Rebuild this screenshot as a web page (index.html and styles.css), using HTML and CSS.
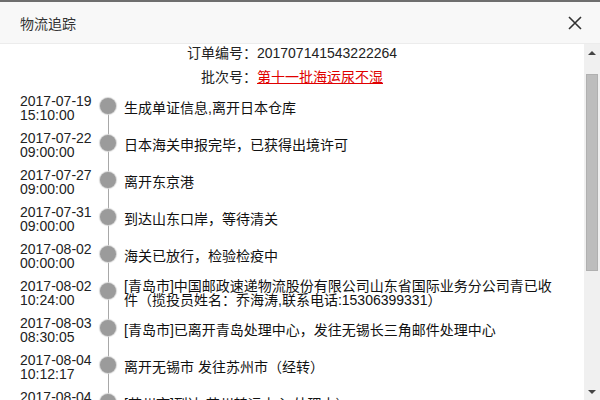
FILE: index.html
```html
<!DOCTYPE html>
<html lang="zh-CN">
<head>
<meta charset="utf-8">
<title>物流追踪</title>
<link rel="stylesheet" href="styles.css">
</head>
<body>
<div class="backdrop"></div>
<div class="modal">
  <div class="modal-header">
    <span class="modal-title">物流追踪</span>
    <svg class="close" width="14" height="14" viewBox="0 0 14 14"><path d="M1 1 L13 13 M13 1 L1 13" stroke="#333" stroke-width="1.6" fill="none"/></svg>
  </div>
  <div class="modal-body">
    <div class="content">
      <div class="info">订单编号：201707141543222264</div>
      <div class="info">批次号：<a class="batch" href="#">第十一批海运尿不湿</a></div>
      <div class="timeline">
        <div class="row first"><div class="date">2017-07-19<br>15:10:00</div><div class="node"><span class="dot"></span></div><div class="desc">生成单证信息,离开日本仓库</div></div>
        <div class="row"><div class="date">2017-07-22<br>09:00:00</div><div class="node"><span class="dot"></span></div><div class="desc">日本海关申报完毕，已获得出境许可</div></div>
        <div class="row"><div class="date">2017-07-27<br>09:00:00</div><div class="node"><span class="dot"></span></div><div class="desc">离开东京港</div></div>
        <div class="row"><div class="date">2017-07-31<br>09:00:00</div><div class="node"><span class="dot"></span></div><div class="desc">到达山东口岸，等待清关</div></div>
        <div class="row"><div class="date">2017-08-02<br>00:00:00</div><div class="node"><span class="dot"></span></div><div class="desc">海关已放行，检验检疫中</div></div>
        <div class="row"><div class="date">2017-08-02<br>10:24:00</div><div class="node"><span class="dot"></span></div><div class="desc">[青岛市]中国邮政速递物流股份有限公司山东省国际业务分公司青已收件（揽投员姓名：乔海涛,联系电话:15306399331）</div></div>
        <div class="row"><div class="date">2017-08-03<br>08:30:05</div><div class="node"><span class="dot"></span></div><div class="desc">[青岛市]已离开青岛处理中心，发往无锡长三角邮件处理中心</div></div>
        <div class="row"><div class="date">2017-08-04<br>10:12:17</div><div class="node"><span class="dot"></span></div><div class="desc">离开无锡市 发往苏州市（经转）</div></div>
        <div class="row"><div class="date">2017-08-04<br>13:40:21</div><div class="node"><span class="dot"></span></div><div class="desc">[苏州市]到达 苏州转运中心 处理中）</div></div>
      </div>
    </div>
    <div class="scrollbar">
      <div class="sb-btn"><span class="arrow-up"></span></div>
      <div class="sb-track"><div class="sb-thumb"></div></div>
      <div class="sb-btn"><span class="arrow-down"></span></div>
    </div>
  </div>
</div>
</body>
</html>
```
FILE: styles.css
```css
* { box-sizing: border-box; }
html, body { margin: 0; padding: 0; }
body {
  width: 600px;
  height: 400px;
  overflow: hidden;
  background: #fff;
  font-family: "Liberation Sans", Arial, "Noto Sans CJK SC", sans-serif;
  font-size: 14px;
  color: #222;
}
.backdrop {
  height: 2px;
  background: #6e6e6e;
}
.modal {
  display: flex;
  flex-direction: column;
  height: 398px;
}
.modal-header {
  height: 42px;
  flex: none;
  background: #f8f8f8;
  border-bottom: 1px solid #ececec;
  display: flex;
  align-items: center;
  justify-content: space-between;
  padding: 0 18px 0 20px;
}
.modal-title {
  color: #333;
  font-size: 14px;
}
.close { display: block; }
.modal-body {
  flex: 1;
  display: flex;
  min-height: 0;
}
.content {
  flex: 1;
  overflow: hidden;
  padding-top: 1px;
}
.info {
  text-align: center;
  height: 24px;
  line-height: 16px;
  color: #222;
}
.batch {
  color: #e00000;
  text-decoration: underline;
}
.timeline {
  padding-left: 20px;
  margin-top: -4px;
}
.row {
  display: grid;
  grid-template-columns: 80px 16px 442px;
  height: 37px;
  align-items: center;
}
.date {
  line-height: 14px;
  color: #222;
  padding-top: 1px;
  white-space: nowrap;
}
.node {
  position: relative;
  height: 37px;
  display: flex;
  align-items: center;
  justify-content: center;
}
.node::before {
  content: "";
  position: absolute;
  left: 7.5px;
  top: 0;
  bottom: 0;
  width: 1px;
  background: #a8a8a8;
}
.row.first .node::before { top: 15px; }
.dot {
  position: relative;
  width: 16px;
  height: 16px;
  border-radius: 50%;
  background: #9b9b9b;
  box-shadow: 0 0 1px 1px #d4d4d4;
  margin-top: -3px;
}
.desc {
  line-height: 14px;
  padding-top: 1px;
  margin-left: 8px;
  word-break: break-all;
  color: #111;
}
.scrollbar {
  width: 16px;
  flex: none;
  background: #f0f0f0;
  display: flex;
  flex-direction: column;
}
.sb-btn {
  height: 17px;
  flex: none;
  display: flex;
  align-items: center;
  justify-content: center;
}
.arrow-up {
  width: 0; height: 0;
  border-left: 4px solid transparent;
  border-right: 4px solid transparent;
  border-bottom: 4px solid #444;
}
.arrow-down {
  width: 0; height: 0;
  border-left: 4px solid transparent;
  border-right: 4px solid transparent;
  border-top: 4px solid #444;
}
.sb-track {
  flex: 1;
  padding: 13px 2px 0 2px;
}
.sb-thumb {
  height: 197px;
  background: #bdbdbd;
  border: 1px solid #b0b0b0;
}
```
